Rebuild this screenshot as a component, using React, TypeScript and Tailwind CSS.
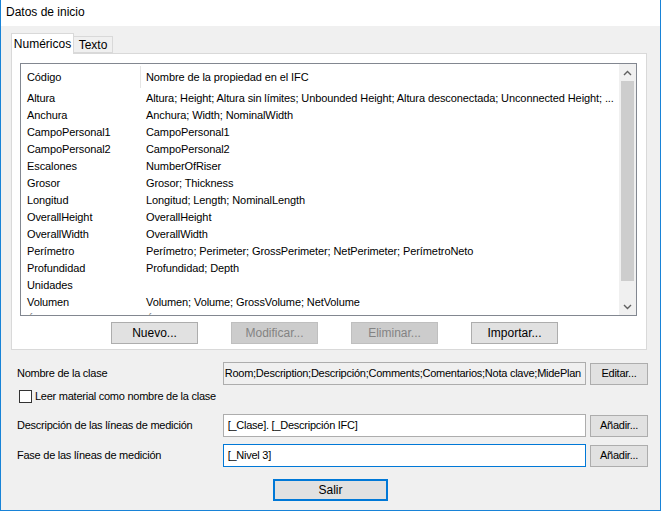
import React from "react";

const ROWS: [string, string][] = [
  ["Altura", "Altura; Height; Altura sin límites; Unbounded Height; Altura desconectada; Unconnected Height; ..."],
  ["Anchura", "Anchura; Width; NominalWidth"],
  ["CampoPersonal1", "CampoPersonal1"],
  ["CampoPersonal2", "CampoPersonal2"],
  ["Escalones", "NumberOfRiser"],
  ["Grosor", "Grosor; Thickness"],
  ["Longitud", "Longitud; Length; NominalLength"],
  ["OverallHeight", "OverallHeight"],
  ["OverallWidth", "OverallWidth"],
  ["Perímetro", "Perímetro; Perimeter; GrossPerimeter; NetPerimeter; PerímetroNeto"],
  ["Profundidad", "Profundidad; Depth"],
  ["Unidades", ""],
  ["Volumen", "Volumen; Volume; GrossVolume; NetVolume"],
  ["Área", "Área; Area; GrossArea"],
];

const seg = "font-['Liberation_Sans',Arial,sans-serif]";

function Btn({ children, disabled, w = "w-[87px]" }: { children: React.ReactNode; disabled?: boolean; w?: string }) {
  return (
    <div className={`${w} h-[22px] flex items-center justify-center border ${disabled ? "border-[#bfbfbf] bg-[#cccccc] text-[#838383]" : "border-[#adadad] bg-[#e1e1e1] text-black"} text-[12px]`}>
      {children}
    </div>
  );
}

function Chevron({ up }: { up?: boolean }) {
  return (
    <svg width="9" height="6" viewBox="0 0 9 6">
      <path d={up ? "M1 5 L4.5 1.5 L8 5" : "M1 1 L4.5 4.5 L8 1"} fill="none" stroke="#606060" strokeWidth="1.4" />
    </svg>
  );
}

export default function App() {
  return (
    <div className={`w-[661px] h-[511px] flex flex-col bg-[#f0f0f0] border-x border-b border-[#1883d7] ${seg} text-black overflow-hidden`}>
      {/* title bar */}
      <div className="h-[26px] bg-white shrink-0 pl-[5px] pt-[5px] text-[12px] leading-[15px]">Datos de inicio</div>

      <div className="flex flex-col pl-[10px] pr-[13px]">
        {/* tabs */}
        <div className="flex items-end h-[20px] mt-[7px] relative z-10 text-[12px]">
          <div className="h-[21px] w-[63px] bg-white border border-b-0 border-[#d9d9d9] flex items-center justify-center -mb-px">Numéricos</div>
          <div className="h-[17px] w-[39px] bg-[#f0f0f0] border border-l-0 border-[#d9d9d9] flex items-center justify-center">Texto</div>
        </div>

        {/* tab panel */}
        <div className="h-[297px] bg-white border border-[#d9d9d9] px-[8px] pt-[9px] flex flex-col">
          <div className="h-[253px] w-[617px] border border-[#828790] bg-white flex overflow-hidden">
            <div className="flex-1 min-w-0 flex flex-col text-[11px] tracking-[-0.1px] leading-[17px] overflow-hidden">
              <div className="h-[26px] flex items-center shrink-0">
                <div className="w-[119px] shrink-0 pl-[6px]">Código</div>
                <div className="w-px h-[22px] bg-[#e5e5e5] shrink-0" />
                <div className="pl-[5px]">Nombre de la propiedad en el IFC</div>
              </div>
              {ROWS.map(([a, b]) => (
                <div key={a} className="h-[17px] flex shrink-0 whitespace-nowrap">
                  <div className="w-[120px] shrink-0 pl-[6px]">{a}</div>
                  <div className="flex-1 min-w-0 overflow-hidden pl-[5px]">{b}</div>
                </div>
              ))}
            </div>
            {/* scrollbar */}
            <div className="w-[17px] bg-[#f0f0f0] flex flex-col shrink-0">
              <div className="h-[17px] flex items-center justify-center"><Chevron up /></div>
              <div className="h-[200px] mx-[2px] bg-[#cdcdcd]" />
              <div className="flex-1" />
              <div className="h-[17px] flex items-center justify-center"><Chevron /></div>
            </div>
          </div>

          <div className="flex pl-[91px] gap-[33px] mt-[6px]">
            <Btn>Nuevo...</Btn>
            <Btn disabled>Modificar...</Btn>
            <Btn disabled>Eliminar...</Btn>
            <Btn>Importar...</Btn>
          </div>
        </div>
      </div>

      {/* lower form */}
      <div className="flex flex-col pl-[16px] pr-[12px] mt-[12px] text-[11px] tracking-[-0.25px]">
        <div className="flex items-center h-[23px]">
          <div className="w-[206px]">Nombre de la clase</div>
          <div className="w-[364px] h-[23px] border border-[#adadad] bg-[#f0f0f0] flex items-center justify-end pr-[4px] overflow-hidden whitespace-nowrap">
            <span className="shrink-0">Room;Description;Descripción;Comments;Comentarios;Nota clave;MidePlan</span>
          </div>
          <div className="ml-[4px]"><Btn w="w-[58px]"><span className="text-[11px]">Editar...</span></Btn></div>
        </div>

        <div className="flex items-center h-[13px] mt-[5px] pl-[2px]">
          <div className="w-[13px] h-[13px] border border-[#333] bg-white shrink-0" />
          <div className="ml-[3px]">Leer material como nombre de la clase</div>
        </div>

        <div className="flex items-center h-[23px] mt-[11px]">
          <div className="w-[206px]">Descripción de las líneas de medición</div>
          <div className="w-[364px] h-[23px] border border-[#adadad] bg-white flex items-center pl-[4px]">[_Clase]. [_Descripción IFC]</div>
          <div className="ml-[4px]"><Btn w="w-[58px]"><span className="text-[11px]">Añadir...</span></Btn></div>
        </div>

        <div className="flex items-center h-[23px] mt-[7px]">
          <div className="w-[206px]">Fase de las líneas de medición</div>
          <div className="w-[364px] h-[23px] border border-[#0078d7] bg-white flex items-center pl-[4px]">[_Nivel 3]</div>
          <div className="ml-[4px]"><Btn w="w-[58px]"><span className="text-[11px]">Añadir...</span></Btn></div>
        </div>

        <div className="flex mt-[12px] pl-[256px]">
          <div className="w-[115px] h-[22px] border-2 border-[#0078d7] bg-[#e1e1e1] flex items-center justify-center text-[12px] tracking-normal">Salir</div>
        </div>
      </div>
    </div>
  );
}
